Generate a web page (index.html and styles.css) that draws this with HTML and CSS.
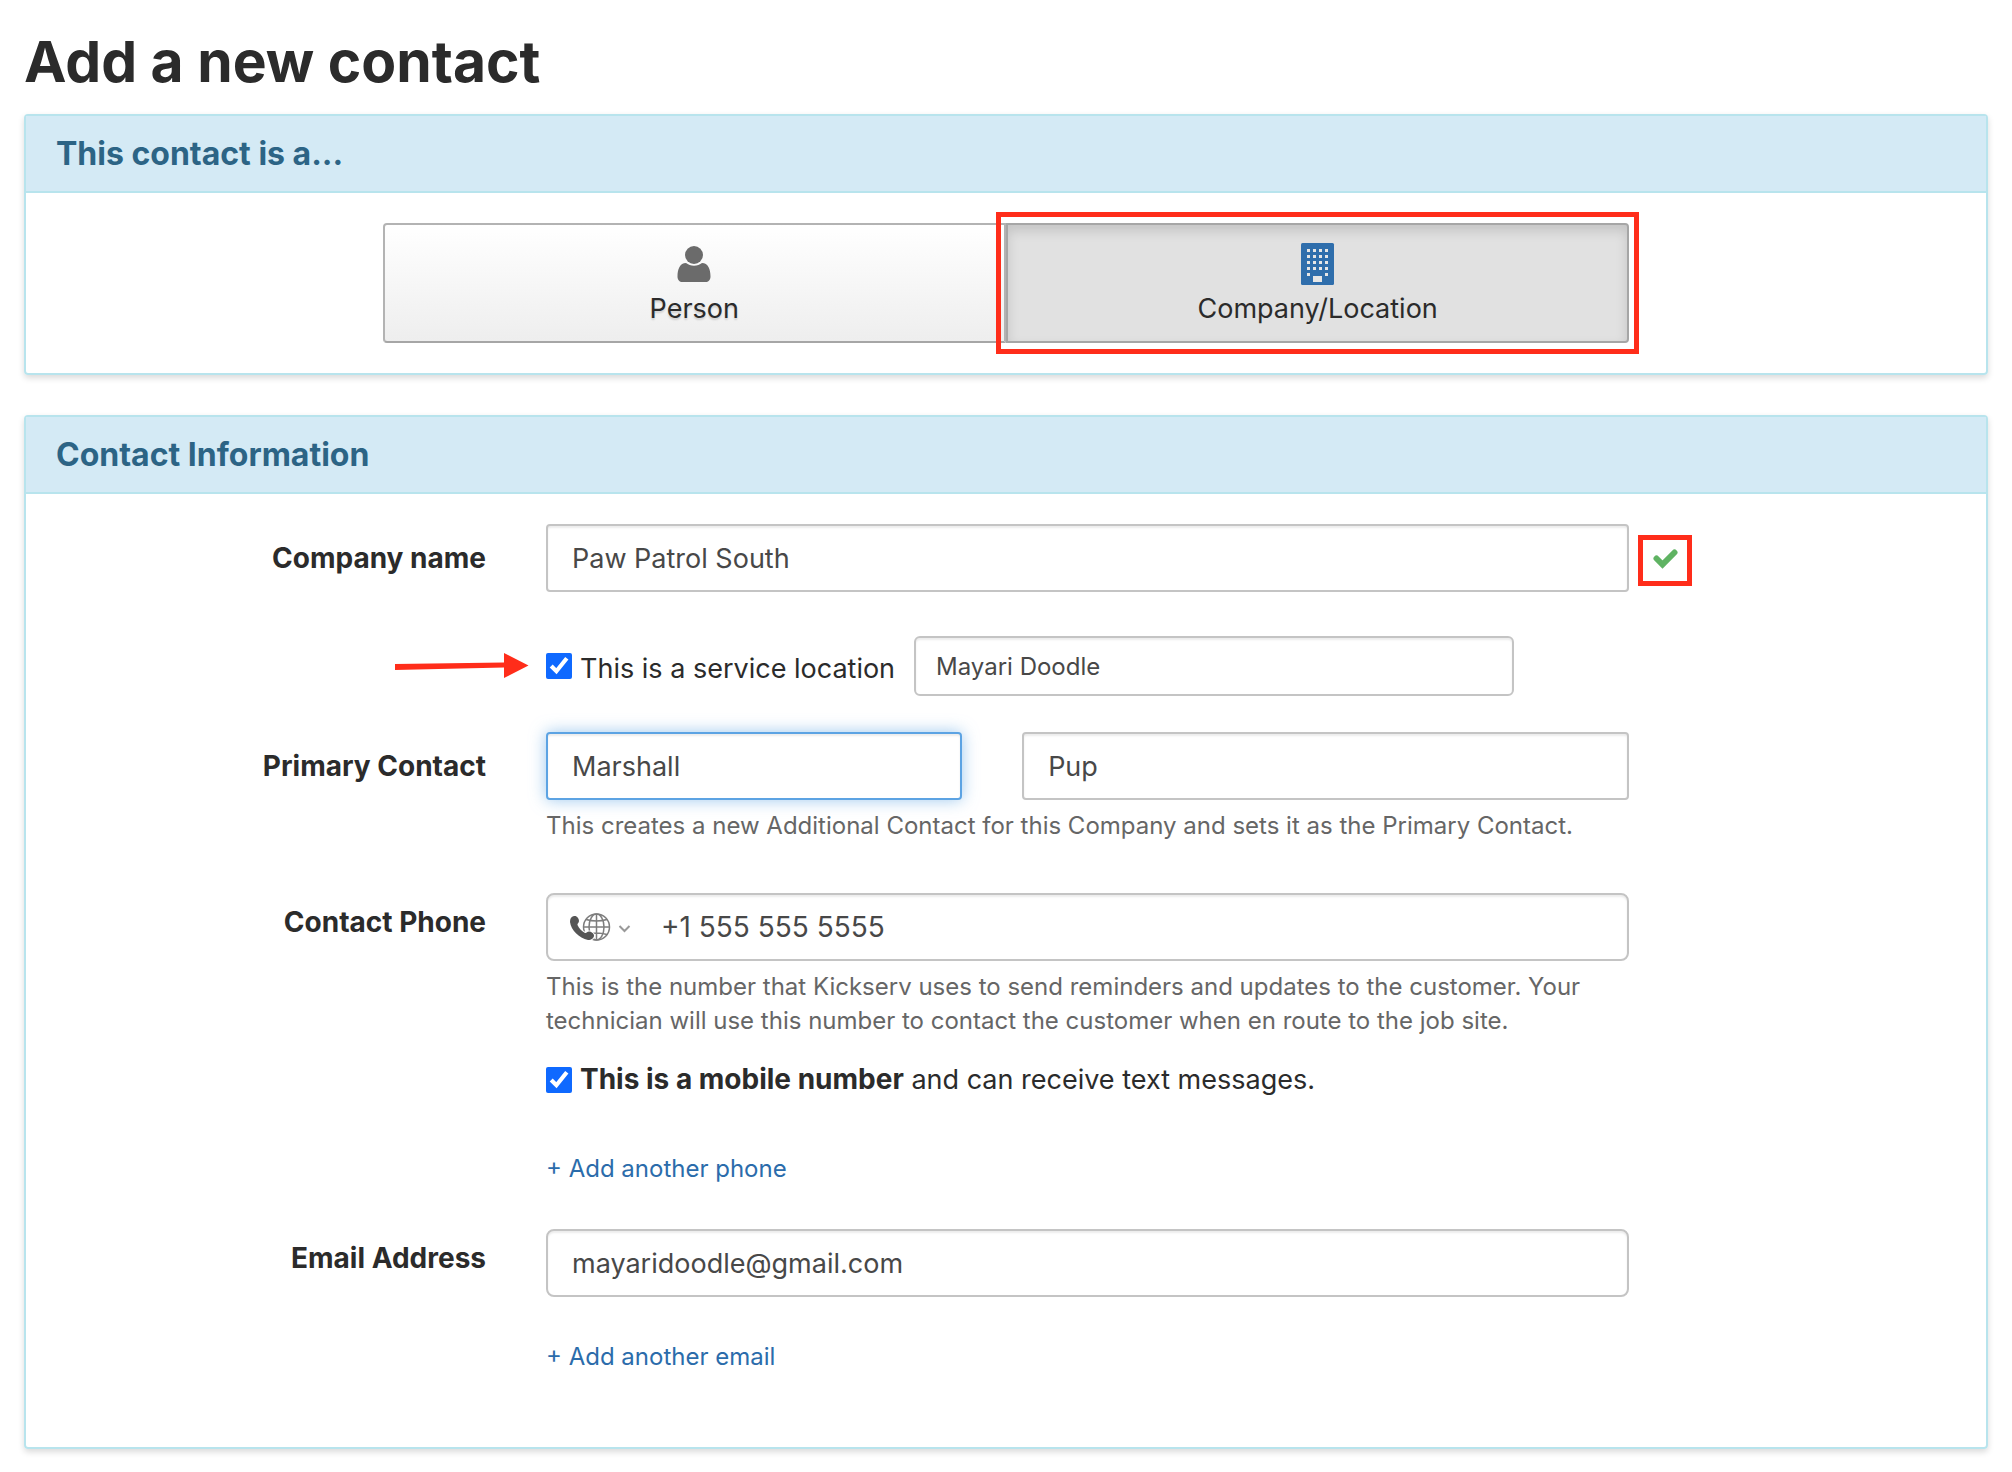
FILE: index.html
```html
<!DOCTYPE html>
<html lang="en">
<head>
    <meta charset="UTF-8">
    <title>Add a new contact</title>
    <link rel="stylesheet" href="styles.css">
</head>
<body>
    <h1>Add a new contact</h1>

    <section class="panel">
        <h2 class="panel-heading">This contact is a...</h2>
        <div class="type-picker">
            <button type="button" class="type-btn">
                <svg class="type-icon" viewBox="0 0 34 42" aria-hidden="true">
                    <circle cx="17" cy="12" r="9"/>
                    <path d="M9 20C3 20 0.500 26 0.500 33.500C0.500 37 2.500 39 5.500 39H28.500C31.500 39 33.500 37 33.500 33.500C33.500 26 31 20 25 20C23 21.500 20 22.700 17 22.700S11 21.500 9 20Z"/>
                </svg>
                Person
            </button>
            <button type="button" class="type-btn active">
                <svg class="type-icon" viewBox="0 0 34 42" aria-hidden="true">
                    <rect width="33" height="42" rx="1.500"/>
                    <g class="windows">
                        <path d="M6 7.500H27.500" stroke-dasharray="3 3"/>
                        <path d="M6 13.500H27.500" stroke-dasharray="3 3"/>
                        <path d="M6 19.500H27.500" stroke-dasharray="3 3"/>
                        <path d="M6 25.500H27.500" stroke-dasharray="3 3"/>
                        <path d="M6 31.500h3M24 31.500h3"/>
                        <path d="M12 36h9" stroke-width="6"/>
                    </g>
                </svg>
                Company/Location
                <span class="highlight highlight-btn"></span>
            </button>
        </div>
    </section>

    <section class="panel">
        <h2 class="panel-heading">Contact Information</h2>
        <form class="contact-form">
            <div class="form-row">
                <label class="row-label" for="companyName">Company name</label>
                <div class="field with-mark">
                    <input type="text" id="companyName" class="text-input" value="Paw Patrol South">
                    <span class="highlight highlight-check">
                        <svg viewBox="0 0 25 20" width="25" height="20" aria-hidden="true">
                            <path d="M3.500 9.500L9.500 15.500L21.500 3.500"/>
                        </svg>
                    </span>
                </div>
            </div>

            <div class="form-row service-row">
                <div class="field service-field">
                    <svg class="arrow" viewBox="0 0 134 26" width="134" height="26" aria-hidden="true">
                        <path d="M0 11L109 9.500V0L133.500 12.500L109 25V14.500L0 17Z"/>
                    </svg>
                    <label class="check-label">
                        <input type="checkbox" checked>
                        <span>This is a service location</span>
                    </label>
                    <input type="text" class="text-input small-input" value="Mayari Doodle" aria-label="Service location for">
                </div>
            </div>

            <div class="form-row primary-row">
                <label class="row-label" for="firstName">Primary Contact</label>
                <div class="field">
                    <div class="name-inputs">
                        <input type="text" id="firstName" class="text-input focused" value="Marshall">
                        <input type="text" class="text-input" value="Pup" aria-label="Last name">
                    </div>
                    <p class="help-text">This creates a new Additional Contact for this Company and sets it as the Primary Contact.</p>
                </div>
            </div>

            <div class="form-row phone-row">
                <label class="row-label raised" for="phone">Contact Phone</label>
                <div class="field">
                    <div class="phone-input">
                        <button type="button" class="country-btn" aria-label="Select country">
                            <svg viewBox="0 0 62 28" width="62" height="28" aria-hidden="true">
                                <g class="globe">
                                    <circle cx="26.500" cy="14" r="13"/>
                                    <ellipse cx="26.500" cy="14" rx="7.500" ry="13"/>
                                    <path d="M26.500 1V27M13.500 14H39.500M16 6.500Q26.500 9.500 37 6.500M16 21.500Q26.500 18.500 37 21.500"/>
                                </g>
                                <path class="handset" d="M4 3C1 3.500 0 6 0 9C1 17 9 25 18 27C21.500 27 24 25 24 22.500C24 20.500 21 18.500 19 18.500C17 18.500 16.500 20.500 15 20C12 18.500 9 15.500 7.500 12C7 10.500 9 10 9 8C9 5.500 7 2.500 4 3Z"/>
                                <path class="chevron" d="M49.500 13L54.500 18L59.500 13"/>
                            </svg>
                        </button>
                        <input type="tel" id="phone" value="+1 555 555 5555">
                    </div>
                    <p class="help-text">This is the number that Kickserv uses to send reminders and updates to the customer. Your technician will use this number to contact the customer when en route to the job site.</p>
                    <label class="check-label mobile-label">
                        <input type="checkbox" checked>
                        <span><b>This is a mobile number</b> and can receive text messages.</span>
                    </label>
                    <a href="#" class="add-link add-phone">+ Add another phone</a>
                </div>
            </div>

            <div class="form-row email-row">
                <label class="row-label raised" for="email">Email Address</label>
                <div class="field">
                    <input type="email" id="email" class="text-input rounded" value="mayaridoodle@gmail.com">
                    <a href="#" class="add-link add-email">+ Add another email</a>
                </div>
            </div>
        </form>
    </section>
</body>
</html>
```
FILE: styles.css
```css
* {
    box-sizing: border-box;
}

body {
    margin: 0;
    padding: 29px 24px 20px;
    font-family: Inter, "Liberation Sans", sans-serif;
    font-size: 27px;
    line-height: 40px;
    color: #2b2b2b;
    background-color: #fff;
}

h1 {
    margin: 0 0 19px;
    font-size: 57px;
    line-height: 66px;
}

button, input {
    font: inherit;
    color: inherit;
}

b {
    font-size: 28px;
}

.panel {
    border: 2px solid #b8e4ed;
    border-radius: 4px;
    box-shadow: 0 3px 6px rgba(0,0,0,0.15);
}

.panel + .panel {
    margin-top: 40px;
}

.panel-heading {
    margin: 0;
    padding: 18px 30px 17px;
    font-size: 32px;
    line-height: 40px;
    color: #2c6485;
    background-color: #d4eaf5;
    border-bottom: 2px solid #b8e4ed;
}

.type-picker {
    display: flex;
    width: calc(100% * 8 / 12);
    margin: 0 auto 0 calc(100% * 2 / 12);
    padding: 30px;
}

.type-btn {
    position: relative;
    flex: 1;
    display: flex;
    flex-direction: column;
    align-items: center;
    gap: 4px;
    padding: 18px 0 12px;
    border: 2px solid #b3b3b3;
    border-bottom-color: #a6a6a6;
    border-radius: 4px 0 0 4px;
    background: linear-gradient(#fff, #eee);
    text-shadow: 0 2px 2px rgba(0,0,0,0.15);
    cursor: pointer;
}

.type-btn.active {
    border-color: #a6a6a6;
    border-radius: 0 4px 4px 0;
    background: #e1e1e1;
    box-shadow: inset 0 6px 12px rgba(0,0,0,0.13);
    text-shadow: none;
}

.type-icon {
    width: 34px;
    height: 42px;
    fill: #6b6b6b;
}

.active .type-icon {
    fill: #2f6eac;
}

.windows {
    fill: none;
    stroke: #e6e6e6;
    stroke-width: 3;
}

/* red call-outs */
.highlight {
    position: absolute;
    border: 5px solid #ff2d1a;
}

.highlight-btn {
    inset: -13px -12px;
}

.highlight-check {
    left: calc(100% + 9px);
    top: 11px;
    width: 54px;
    height: 51px;
    padding-bottom: 4px;
    display: flex;
    align-items: center;
    justify-content: center;
}

.highlight-check path {
    fill: none;
    stroke: #5fb363;
    stroke-width: 6;
    stroke-linecap: round;
}

.arrow {
    position: absolute;
    right: calc(100% + 17px);
    top: 17px;
    fill: #ff2d1a;
}

.contact-form {
    padding: 30px 0 73px;
}

.form-row {
    display: grid;
    grid-template-columns: 3fr 7fr 2fr;
}

.row-label {
    padding: 14px 30px 0 0;
    text-align: right;
    font-size: 28px;
    font-weight: bold;
}

.row-label.raised {
    padding-top: 9px;
}

.field {
    grid-column: 2;
    margin: 0 30px;
}

.with-mark,
.service-field {
    position: relative;
}

.text-input,
.phone-input {
    display: block;
    width: 100%;
    height: 68px;
    padding: 0 24px;
    color: #484848;
    background-color: #fff;
    border: 2px solid #c4c4c4;
    border-radius: 4px;
    box-shadow: inset 0 2px 2px rgba(0,0,0,0.08);
}

.text-input.rounded,
.phone-input {
    border-radius: 8px;
}

.text-input.focused {
    border-color: #5ca3e3;
    outline: none;
    box-shadow: inset 0 2px 2px rgba(0,0,0,0.08), 0 0 16px rgba(92,163,227,0.6);
}

.service-row {
    margin-top: 44px;
}

.service-field {
    display: flex;
    align-items: center;
}

.check-label {
    display: flex;
    align-items: center;
    gap: 8px;
}

.check-label input {
    width: 26px;
    height: 26px;
    margin: 0;
    accent-color: #0f69ff;
}

.service-field .check-label {
    flex: 0 0 368px;
    white-space: nowrap;
}

.service-field .check-label span {
    padding-top: 6px;
}

.small-input {
    width: 600px;
    height: 60px;
    padding: 0 20px;
    font-size: 24px;
    border-radius: 6px;
}

.primary-row {
    margin-top: 36px;
}

.name-inputs {
    display: grid;
    grid-template-columns: 416fr 607fr;
    gap: 60px;
}

.help-text {
    margin: 9px 0 0;
    font-size: 24px;
    line-height: 34px;
    color: #666;
}

.phone-row {
    margin-top: 50px;
}

.phone-input {
    display: flex;
    align-items: center;
    padding-left: 22px;
    font-size: 28px;
}

.country-btn {
    display: flex;
    padding: 0;
    margin-right: 29px;
    background: none;
    border: none;
    cursor: pointer;
}

.globe {
    fill: none;
    stroke: #7d7d7d;
    stroke-width: 1.5;
}

.handset {
    fill: #555;
    stroke: #fff;
    stroke-width: 2;
    paint-order: stroke;
}

.chevron {
    fill: none;
    stroke: #999;
    stroke-width: 2;
}

.phone-input input {
    flex: 1;
    padding: 0;
    border: none;
    outline: none;
    background: none;
}

.mobile-label {
    margin-top: 21px;
}

.add-link {
    display: block;
    font-size: 24px;
    line-height: 34px;
    color: #2b6cab;
    text-decoration: none;
}

.add-phone {
    margin-top: 52px;
}

.email-row,
.add-email {
    margin-top: 43px;
}
```
